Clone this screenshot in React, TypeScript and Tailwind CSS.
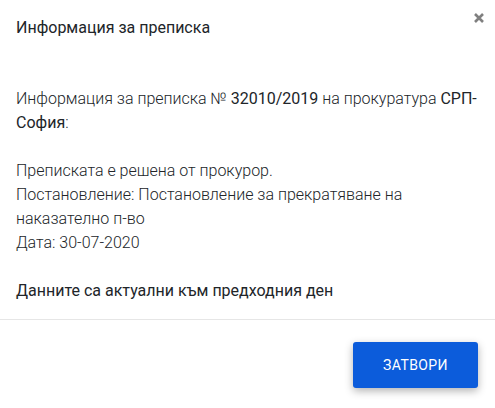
export default function App() {
  return (
    <div className="w-[495px] h-[408px] bg-white text-[#212529] flex flex-col" style={{ fontFamily: 'Roboto, "Noto Sans", sans-serif' }}>
      {/* Header */}
      <div className="relative px-4 pt-4">
        <h2 className="text-[16px] leading-6 font-normal">Информация за преписка</h2>
        <button className="absolute right-[9px] top-[11px] w-[14px] h-[14px] flex items-center justify-center text-[#808080]">
          <svg width="10" height="10" viewBox="0 0 10 10">
            <path d="M1 1 L9 9 M9 1 L1 9" stroke="currentColor" strokeWidth="2.6" />
          </svg>
        </button>
      </div>

      {/* Body */}
      <div className="px-4 pt-[47px] text-[16px] leading-6 font-light">
        <p>
          Информация за преписка № <span className="font-normal">32010/2019</span> на прокуратура{' '}
          <span className="font-normal">СРП-София</span>:
        </p>
        <p className="mt-6">
          Преписката е решена от прокурор.
          <br />
          Постановление: Постановление за прекратяване на наказателно п-во
          <br />
          Дата: 30-07-2020
        </p>
        <p className="mt-6 font-normal">Данните са актуални към предходния ден</p>
      </div>

      {/* Footer */}
      <div className="mt-[16px] border-t border-[#e6e6e6] flex justify-end pt-[22px] pr-[17px]">
        <button className="w-[125px] h-[46px] rounded-[3px] bg-[#0c5cdb] text-white text-[14px] uppercase tracking-[0.4px] shadow-[0_3px_8px_rgba(0,0,0,0.3)]">
          Затвори
        </button>
      </div>
    </div>
  );
}
